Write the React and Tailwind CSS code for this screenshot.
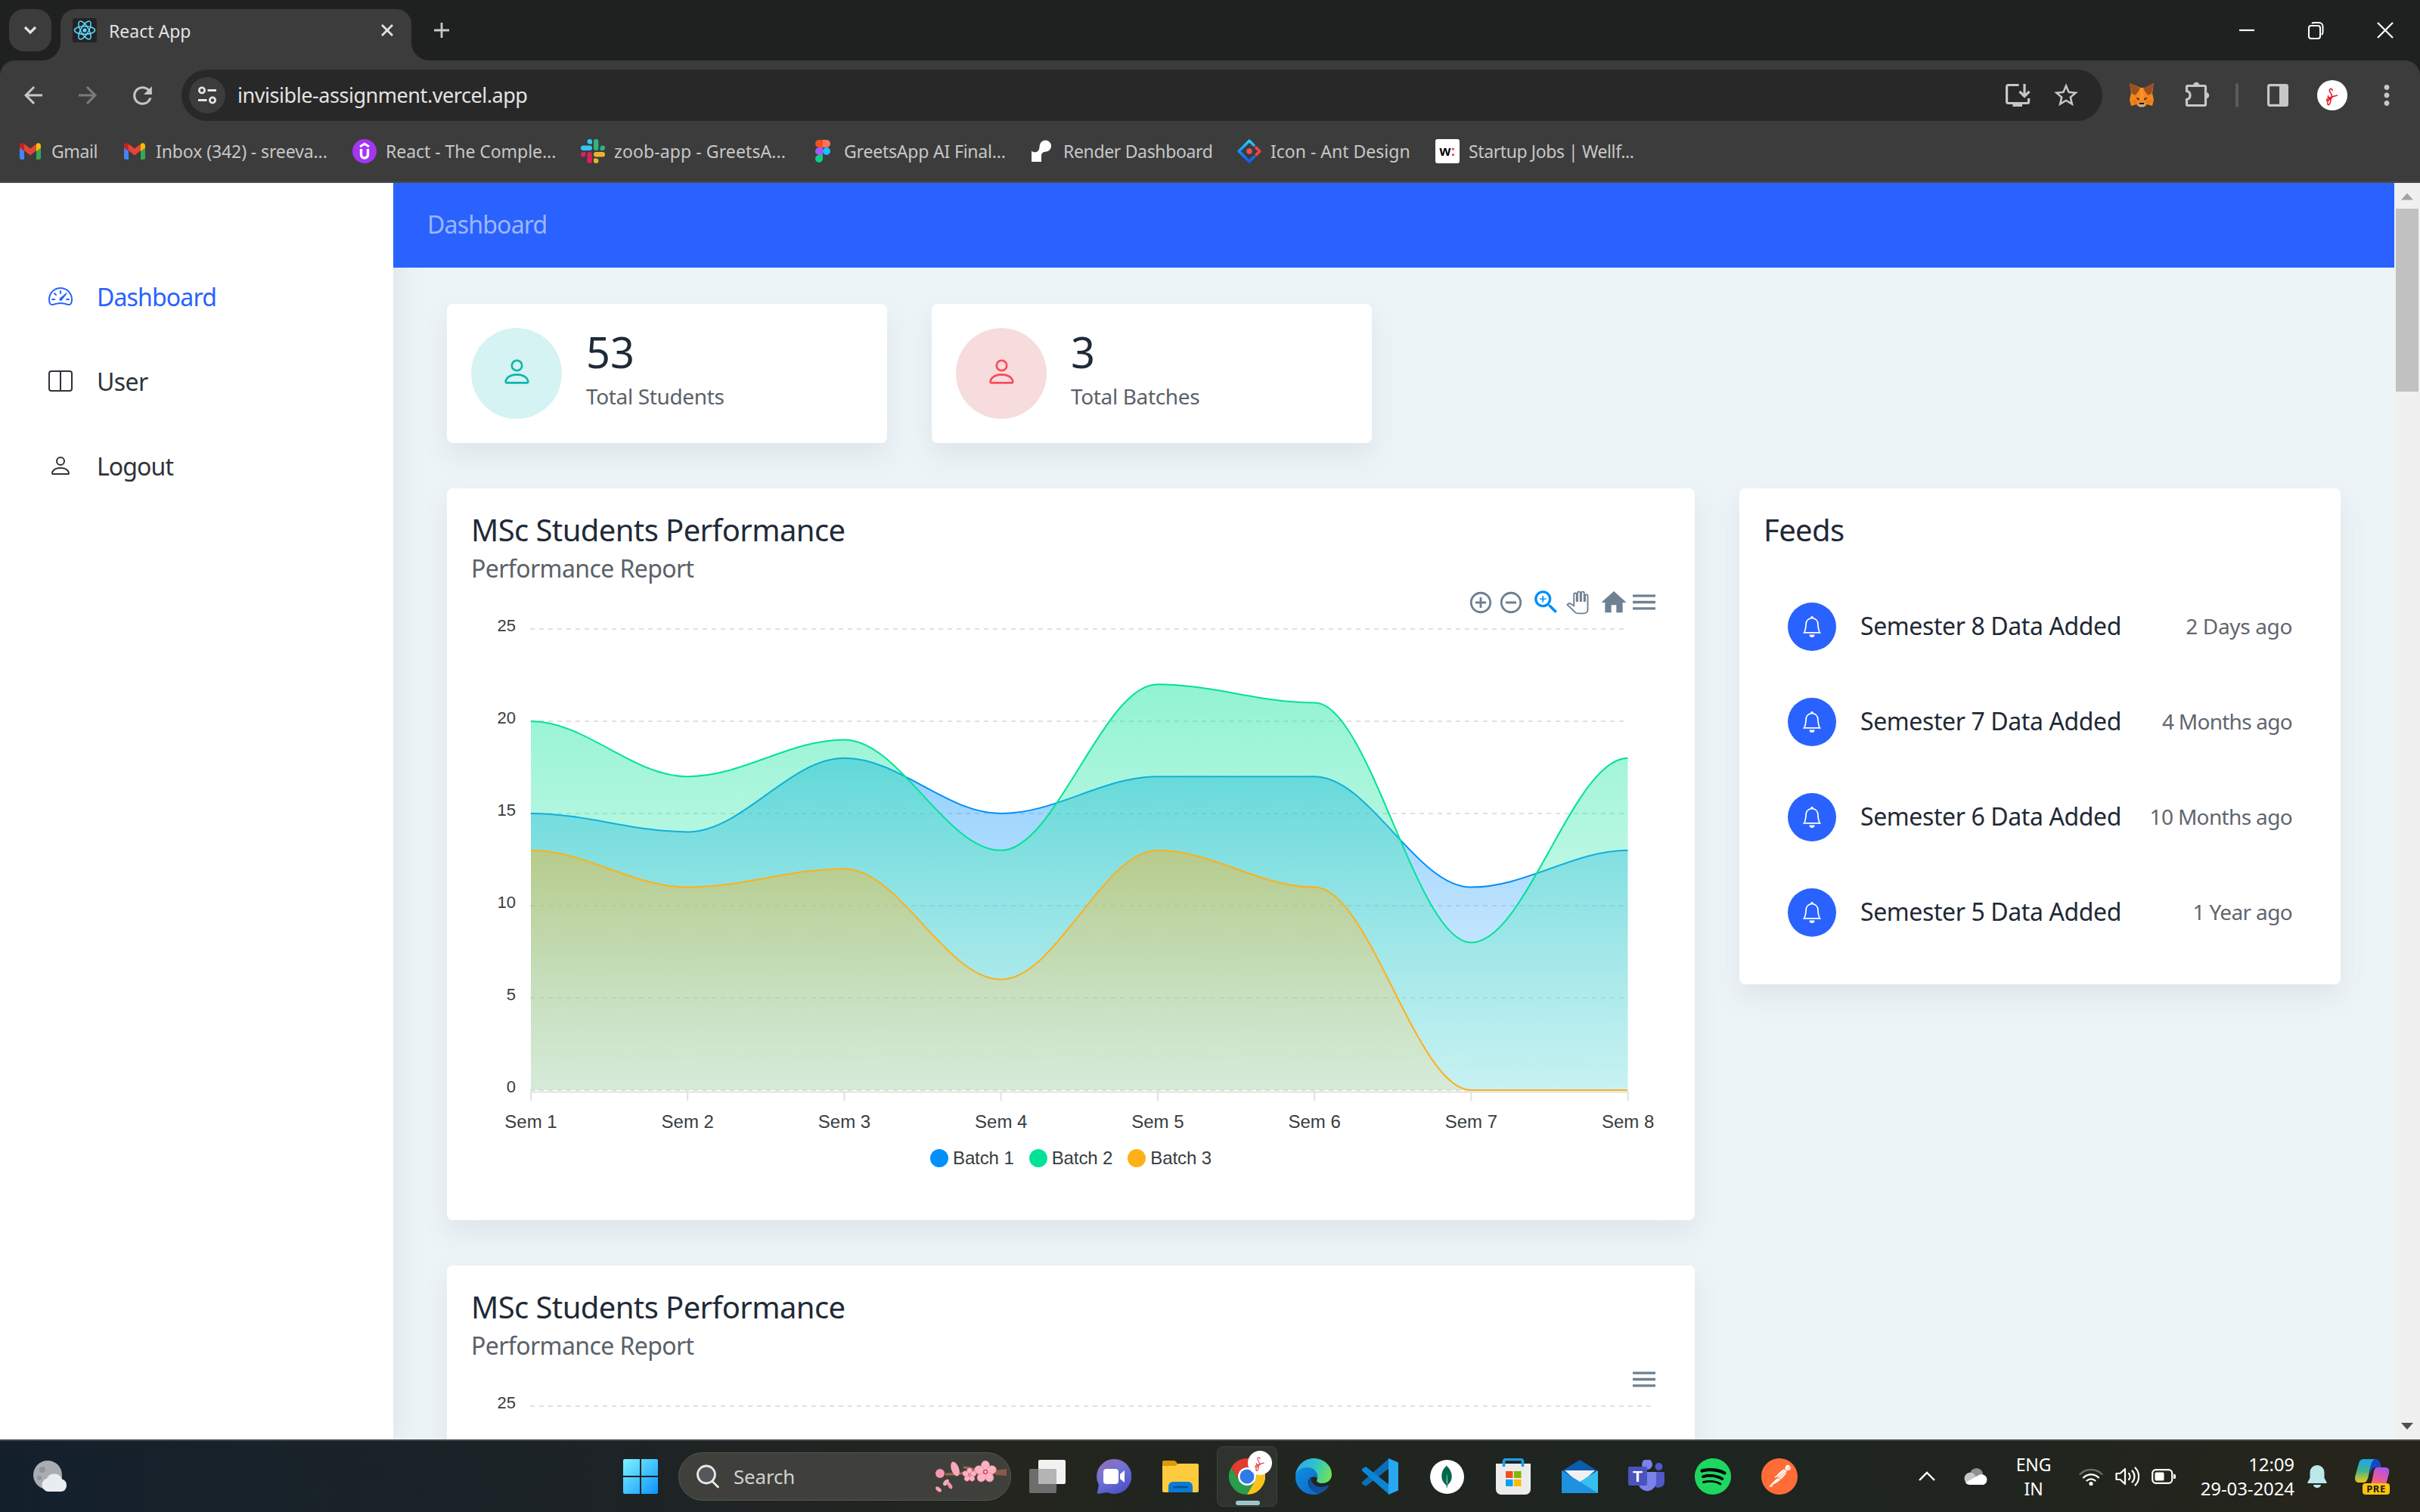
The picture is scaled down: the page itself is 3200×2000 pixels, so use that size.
import React from "react";
import { BsPerson, BsSpeedometer2, BsLayoutSplit, BsBell } from "react-icons/bs";
import {
  MdArrowBack, MdArrowForward, MdRefresh, MdStarBorder, MdMoreVert, MdZoomIn,
  MdHome, MdMenu, MdAddCircleOutline, MdRemoveCircleOutline,
} from "react-icons/md";
import { SiMongodb, SiPostman, SiSpotify } from "react-icons/si";

/* ---------- brand icons ---------- */

const ReactLogo = () => (
  <svg width="32" height="32" viewBox="0 0 32 32">
    <rect width="32" height="32" rx="3" fill="#222326" />
    <g fill="none" stroke="#61dafb" strokeWidth="1.5">
      <ellipse cx="16" cy="16" rx="13.5" ry="5.2" />
      <ellipse cx="16" cy="16" rx="13.5" ry="5.2" transform="rotate(60 16 16)" />
      <ellipse cx="16" cy="16" rx="13.5" ry="5.2" transform="rotate(120 16 16)" />
    </g>
    <circle cx="16" cy="16" r="2.6" fill="#61dafb" />
  </svg>
);

const GmailIcon = () => (
  <svg width="32" height="32" viewBox="0 0 32 32">
    <path d="M2 9v16a2 2 0 0 0 2 2h4V13z" fill="#4285f4" />
    <path d="M30 9v16a2 2 0 0 1-2 2h-4V13z" fill="#34a853" />
    <path d="M8 6.5l8 6 8-6V15l-8 6.5L8 15z" fill="#ea4335" />
    <path d="M24 6.5C27 4 30 6 30 9v2.5L24 16z" fill="#fbbc04" />
    <path d="M8 6.5C5 4 2 6 2 9v2.5L8 16z" fill="#c5221f" />
  </svg>
);

const UdemyIcon = () => (
  <svg width="32" height="32" viewBox="0 0 32 32">
    <circle cx="16" cy="16" r="16" fill="#a435f0" />
    <path d="M10 10l6-3.8 6 3.8" fill="none" stroke="#fff" strokeWidth="3" />
    <path d="M11.5 13v7.5a4.5 4.5 0 0 0 9 0V13" fill="none" stroke="#fff" strokeWidth="3.4" />
  </svg>
);

const SlackIcon = () => (
  <svg width="32" height="32" viewBox="0 0 32 32">
    <rect x="0" y="8.5" width="15" height="6.4" rx="3.2" fill="#36c5f0" />
    <path d="M15 6.4h-3.2A3.2 3.2 0 1 1 15 3.2z" fill="#36c5f0" />
    <rect x="17" y="0" width="6.4" height="15" rx="3.2" fill="#2eb67d" />
    <path d="M25.6 14.9v-3.2a3.2 3.2 0 1 1 3.2 3.2z" fill="#2eb67d" />
    <rect x="17" y="17" width="15" height="6.4" rx="3.2" fill="#ecb22e" />
    <path d="M17 25.6h3.2a3.2 3.2 0 1 1-3.2 3.2z" fill="#ecb22e" />
    <rect x="8.5" y="17" width="6.4" height="15" rx="3.2" fill="#e01e5a" />
    <path d="M6.4 17v3.2A3.2 3.2 0 1 1 3.2 17z" fill="#e01e5a" />
  </svg>
);

const FigmaIcon = () => (
  <svg width="32" height="32" viewBox="0 0 32 32">
    <path d="M16 1h-5a5 5 0 0 0 0 10h5z" fill="#f24e1e" />
    <path d="M16 1h5a5 5 0 0 1 0 10h-5z" fill="#ff7262" />
    <path d="M16 11h-5a5 5 0 0 0 0 10h5z" fill="#a259ff" />
    <circle cx="21" cy="16" r="5" fill="#1abcfe" />
    <path d="M16 21h-5a5 5 0 1 0 5 5z" fill="#0acf83" />
  </svg>
);

const RenderIcon = () => (
  <svg width="32" height="32" viewBox="0 0 32 32">
    <path d="M2 30V15.500c2 2.500 8 3 10-2 .5-2.500.5-4 1-6A7.600 7.600 0 1 1 22 16.500c-5 .5-7 2-7 6V30z" fill="#fff" />
  </svg>
);

const AntIcon = () => (
  <svg width="32" height="32" viewBox="0 0 32 32">
    <defs>
      <linearGradient id="antBlue" x1="0" y1="0" x2="0" y2="1">
        <stop offset="0" stopColor="#29cdff" />
        <stop offset="0.5" stopColor="#148eff" />
        <stop offset="1" stopColor="#0a60ff" />
      </linearGradient>
    </defs>
    <path d="M22 8.200L16 2.200 2.200 16 16 29.800l6-6" fill="none" stroke="url(#antBlue)" strokeWidth="3.600" strokeLinecap="round" strokeLinejoin="round" />
    <path d="M25 11.400L29.700 16 25 20.700" fill="none" stroke="#f5404b" strokeWidth="3.600" strokeLinecap="round" strokeLinejoin="round" />
    <circle cx="16" cy="16" r="3.700" fill="#f74a55" />
  </svg>
);

const WellfoundIcon = () => (
  <span className="flex h-8 w-8 items-center justify-center rounded-[3px] bg-white pb-[2px] font-['Liberation_Sans'] text-[19px] font-bold leading-none tracking-normal text-black">
    w<span className="text-[#ec2e3a]">:</span>
  </span>
);

const MetaMaskIcon = () => (
  <svg width="34" height="34" viewBox="0 0 34 34">
    <path d="M1 1l2 13-2 9 2 8 7-2 3 3h8l3-3 7 2 2-8-2-9 2-13-12 6h-6z" fill="#f6851b" />
    <path d="M1 1l3 14 5 2 6-9z M33 1l-3 14-5 2-6-9z" fill="#9c4f1f" />
    <path d="M15 8h4l1 15h-6z" fill="#f89c35" opacity=".6" />
    <path d="M3 24l8-1-2 6zM31 24l-8-1 2 6z" fill="#e4761b" />
    <path d="M9 20l5 1-1 3zM25 20l-5 1 1 3z" fill="#233447" />
    <path d="M14 27h6v2h-6z" fill="#161616" />
    <path d="M12 29h10l-2 3.500h-6z" fill="#c0ad9e" />
  </svg>
);

const Squiggle = ({ size, stroke = "#e8111c" }) => (
  <svg width={size} height={size} viewBox="0 0 40 40">
    <path
      d="M20 13c0-4-5-3-4 1 1 3 5 5 3 9-2 3-6 1-5-2M18 23c-4 0-7 3-6 5 2 1 6-3 9-6 2-2 4 0 6-2M15 26c-3 5-2 9 0 8 2-2 3-8 3-11"
      fill="none" stroke={stroke} strokeWidth="1.700" strokeLinecap="round"
    />
  </svg>
);

const InstallIcon = () => (
  <svg width="34" height="34" viewBox="0 0 34 34" fill="none" stroke="#c7c7c7" strokeWidth="3.200">
    <path d="M18.500 3.500H4.600a2 2 0 0 0-2 2v20a2 2 0 0 0 2 2h25a2 2 0 0 0 2-2V21" />
    <path d="M26 2v15M19.500 12l6.500 6.500 6.500-6.500" />
    <path d="M10.500 30h12.500" strokeWidth="4" />
  </svg>
);

const PuzzleIcon = () => (
  <svg width="36" height="36" viewBox="0 0 36 36">
    <path
      d="M5 7.500h22a1.500 1.500 0 0 1 1.500 1.500v23a1.500 1.500 0 0 1-1.500 1.500H5A1.500 1.500 0 0 1 3.500 32v-6.500c6-1 6-10 0-11V9A1.500 1.500 0 0 1 5 7.500z"
      fill="none" stroke="#c7c7c7" strokeWidth="3.200"
    />
    <path d="M12 7a4.200 4.200 0 0 1 8.400 0zM29 16a4.200 4.200 0 0 1 0 8.400z" fill="#c7c7c7" />
  </svg>
);

/* ---------- browser chrome ---------- */

const Flare = ({ flip }) => (
  <svg width="24" height="24" viewBox="0 0 24 24" className={flip ? "-scale-x-100 shrink-0" : "shrink-0"}>
    <path d="M24 0v24H0C13 24 24 13 24 0z" fill="#3c3c3c" />
  </svg>
);

const TabStrip = () => (
  <div className="flex h-20 items-end bg-[#1f2120] pl-3">
    <button className="z-10 mb-3 flex h-14 w-14 items-center justify-center rounded-[20px] bg-[#3c3c3c]">
      <svg width="18" height="12" viewBox="0 0 18 12">
        <path d="M2 2l7 7 7-7" fill="none" stroke="#e3e3e3" strokeWidth="3.200" />
      </svg>
    </button>
    <div className="-ml-3 flex items-end">
      <Flare />
      <div className="flex h-[68px] w-[464px] items-center rounded-t-[20px] bg-[#3c3c3c] pb-3 pl-4 pr-[22px]">
        <ReactLogo />
        <span className="ml-4 flex-1 pt-px text-[23px] leading-8 text-[#e3e3e3]">React App</span>
        <svg width="20" height="20" viewBox="0 0 20 20">
          <path d="M3 3l14 14M17 3L3 17" stroke="#e3e3e3" strokeWidth="2.800" />
        </svg>
      </div>
      <Flare flip />
    </div>
    <svg width="22" height="22" viewBox="0 0 22 22" className="mb-[29px] ml-[5px]">
      <path d="M11 1v20M1 11h20" stroke="#c7c7c7" strokeWidth="2.800" />
    </svg>
    <div className="mb-[26px] ml-auto flex items-center pr-[35px]">
      <svg width="20" height="28" viewBox="0 0 20 28"><path d="M0 14h20" stroke="#fff" strokeWidth="2.200" /></svg>
      <svg width="22" height="28" viewBox="0 0 22 28" className="ml-[70px]" fill="none" stroke="#fff" strokeWidth="2">
        <rect x="2" y="8" width="15" height="17" rx="3" />
        <path d="M6 5c1-1 2-1 3-1h6.500a5 5 0 0 1 5 5v7c0 2-.5 3-1.500 4" />
      </svg>
      <svg width="22" height="28" viewBox="0 0 22 28" className="ml-[70px]">
        <path d="M1 4l20 20M21 4L1 24" stroke="#fff" strokeWidth="2.200" />
      </svg>
    </div>
  </div>
);

const Toolbar = () => (
  <div className="flex h-[92px] items-center pl-2 pr-3">
    <span className="flex w-[72px] justify-center"><MdArrowBack size={36} color="#c7c7c7" /></span>
    <span className="flex w-[72px] justify-center"><MdArrowForward size={36} color="#7c7c7c" /></span>
    <span className="flex w-[72px] justify-center"><MdRefresh size={37} color="#c7c7c7" /></span>
    <div className="ml-4 flex h-[68px] w-[2540px] items-center rounded-full bg-[#282828] pl-[10px] pr-[29px]">
      <span className="flex h-12 w-12 items-center justify-center rounded-full bg-[#3c3c3c]">
        <svg width="26" height="24" viewBox="0 0 26 24" fill="none" stroke="#e3e3e3" strokeWidth="2.800">
          <circle cx="6" cy="5.500" r="3.600" />
          <path d="M13.500 5.500H25M1 18.500h11.500" />
          <circle cx="20" cy="18.500" r="3.600" />
        </svg>
      </span>
      <span className="ml-4 flex-1 text-[27px] leading-9 tracking-[-0.45px] text-[#e3e3e3]">invisible-assignment.vercel.app</span>
      <InstallIcon />
      <span className="ml-[28px]"><MdStarBorder size={38} color="#c7c7c7" /></span>
    </div>
    <span className="ml-5 flex w-16 justify-center"><MetaMaskIcon /></span>
    <span className="ml-[10px] flex w-16 justify-center pb-[4px]"><PuzzleIcon /></span>
    <span className="ml-[18px] h-8 w-1 rounded-full bg-[#5c5c5c]" />
    <span className="ml-5 flex w-16 justify-center">
      <svg width="30" height="32" viewBox="0 0 30 32">
        <rect x="2.600" y="2.600" width="24.800" height="26.800" rx="1.500" fill="none" stroke="#c7c7c7" strokeWidth="3.200" />
        <path d="M17 2h11v28H17z" fill="#c7c7c7" />
      </svg>
    </span>
    <span className="ml-2 flex w-16 justify-center">
      <span className="flex h-10 w-10 items-center justify-center rounded-full bg-white"><Squiggle size={36} /></span>
    </span>
    <span className="ml-2 flex w-16 justify-center"><MdMoreVert size={42} color="#c7c7c7" /></span>
  </div>
);

const BOOKMARKS = [
  { icon: <GmailIcon />, label: "Gmail", cls: "w-[138px] tracking-[-0.4px]" },
  { icon: <GmailIcon />, label: "Inbox (342) - sreeva...", cls: "w-[304px] tracking-[-0.1px]" },
  { icon: <UdemyIcon />, label: "React - The Comple...", cls: "w-[302px] tracking-[-0.05px]" },
  { icon: <SlackIcon />, label: "zoob-app - GreetsA...", cls: "w-[304px] tracking-[0.1px]" },
  { icon: <FigmaIcon />, label: "GreetsApp AI Final...", cls: "w-[290px] tracking-[-0.2px]" },
  { icon: <RenderIcon />, label: "Render Dashboard", cls: "w-[274px] tracking-[-0.35px]" },
  { icon: <AntIcon />, label: "Icon - Ant Design", cls: "w-[262px] tracking-[0px]" },
  { icon: <WellfoundIcon />, label: "Startup Jobs | Wellf...", cls: "w-[300px] tracking-[-0.4px]" },
];

const Bookmarks = () => (
  <div className="flex h-14 items-center pl-6">
    {BOOKMARKS.map((b) => (
      <div key={b.label} className={`flex shrink-0 items-center gap-3 whitespace-nowrap text-[23px] leading-8 text-[#c7c7c7] ${b.cls}`}>
        {b.icon}
        <span>{b.label}</span>
      </div>
    ))}
  </div>
);

/* ---------- dashboard ---------- */

const NavItem = ({ icon, label, cls }) => (
  <div className={`flex h-28 items-center pl-16 text-[32px] ${cls}`}>
    {icon}
    <span className="ml-8 pt-[2px]">{label}</span>
  </div>
);

const Sidebar = () => (
  <aside className="z-10 w-[520px] shrink-0 bg-white pt-[94px] shadow-[2px_0_40px_rgba(90,97,105,0.13)]">
    <NavItem icon={<BsSpeedometer2 size={32} />} label="Dashboard" cls="text-[#2962ff] tracking-[-0.85px]" />
    <NavItem icon={<BsLayoutSplit size={32} />} label="User" cls="text-[#2f3339] tracking-[-0.6px]" />
    <NavItem icon={<BsPerson size={32} />} label="Logout" cls="text-[#2f3339] tracking-[-0.9px]" />
  </aside>
);

const Card = ({ className, children }) => (
  <section className={`rounded-[8px] bg-white shadow-[0_16px_36px_rgba(90,97,105,0.1)] ${className}`}>{children}</section>
);

const StatCard = ({ value, label, circle }) => (
  <Card className="flex h-[184px] w-[582px] items-start pl-8 pt-8">
    <span className={`flex h-[120px] w-[120px] items-center justify-center rounded-full pb-[6px] ${circle}`}>
      <BsPerson size={43} />
    </span>
    <div className="ml-8">
      <div className="h-[61px] text-[56px] leading-[62px] text-[#1f2a37] [font-weight:450]">{value}</div>
      <div className="text-[28px] leading-[58px] tracking-[-0.35px] text-[#5a6169]">{label}</div>
    </div>
  </Card>
);

const SERIES = [
  { name: "Batch 1", color: "#008ffb", light: "#80c7fd", data: [15, 14, 18, 15, 17, 17, 11, 13], dot: "bg-[#008ffb]" },
  { name: "Batch 2", color: "#00e396", light: "#80f1cb", data: [20, 17, 19, 13, 22, 21, 8, 18], dot: "bg-[#00e396]" },
  { name: "Batch 3", color: "#feb019", light: "#ffd88c", data: [13, 11, 12, 6, 13, 11, 0, 0], dot: "bg-[#feb019]" },
];

const X0 = 111;
const STEP = 207.24;
const TOP = 11;
const UNIT = 24.4;
const px = (i) => X0 + i * STEP;
const py = (v) => TOP + (25 - v) * UNIT;

/* Cubic curve with horizontal tangents at every point. */
const curve = (data) =>
  data.reduce((d, v, i) => {
    if (i === 0) return `M${px(0)} ${py(v)}`;
    const h = STEP * 0.35;
    return `${d} C${px(i - 1) + h} ${py(data[i - 1])} ${px(i) - h} ${py(v)} ${px(i)} ${py(v)}`;
  }, "");

const AreaChart = ({ id, plain }) => (
  <svg width="1650" height="690" viewBox="0 0 1650 690" className="block overflow-visible">
    <defs>
      {SERIES.map((s, i) => (
        <linearGradient key={s.name} id={`${id}-${i}`} x1="0" y1="0" x2="0" y2="1">
          <stop offset="0" stopColor={s.color} stopOpacity="0.43" />
          <stop offset="1" stopColor={s.light} stopOpacity="0.25" />
        </linearGradient>
      ))}
      <clipPath id={`${id}-clip`}><rect x={X0} y="0" width={STEP * 7} height="640" /></clipPath>
    </defs>
    {(plain ? [25] : [25, 20, 15, 10, 5, 0]).map((v) => (
      <g key={v}>
        <line x1={X0 - 1} x2={plain ? 1593 : 1557} y1={py(v)} y2={py(v)} stroke="#e0e0e0" strokeWidth="2" strokeDasharray="6 6" />
        <text x="91" y={py(v) + 2.500} textAnchor="end" fill="#373d3f" className="font-['Liberation_Sans'] text-[22px]">{v}</text>
      </g>
    ))}
    {!plain && (
      <>
        <line x1={X0} x2={px(7)} y1={py(0) + 2.500} y2={py(0) + 2.500} stroke="#e0e0e0" strokeWidth="2" />
        <g clipPath={`url(#${id}-clip)`}>
          {SERIES.map((s, i) => (
            <g key={s.name}>
              <path d={`${curve(s.data)} V${py(0)} H${X0} Z`} fill={`url(#${id}-${i})`} />
              <path d={curve(s.data)} fill="none" stroke={s.color} strokeWidth="2" />
            </g>
          ))}
        </g>
        {SERIES[0].data.map((_, i) => (
          <g key={i}>
            <line x1={px(i)} x2={px(i)} y1={py(0) + 2} y2={py(0) + 14} stroke="#e0e0e0" strokeWidth="2" />
            <text x={px(i)} y="671" textAnchor="middle" fill="#373d3f" className="font-['Liberation_Sans'] text-[24px]">{`Sem ${i + 1}`}</text>
          </g>
        ))}
      </>
    )}
  </svg>
);

const PanIcon = () => (
  <svg width="30" height="32" viewBox="0 0 24 25" fill="#fff" stroke="#6e8192" strokeWidth="1.500">
    <path d="M22.800 5.500V20c0 2.200-1.800 4-4 4h-6.500c-1.080 0-2.100-.43-2.850-1.190L1.200 14.830s1.260-1.230 1.300-1.250c.22-.19.49-.29.79-.29.22 0 .42.060.6.160.040.010 4.310 2.460 4.310 2.460V4c0-.83.67-1.500 1.500-1.500S11 3.170 11 4v7h1V2.500c0-.83.67-1.500 1.500-1.500S15 1.670 15 2.500V11h1V2.500c0-.83.67-1.500 1.500-1.500s1.500.67 1.500 1.500V11h1V5.500c0-.83.67-1.500 1.500-1.500s1.300.67 1.300 1.500z" />
  </svg>
);

const ChartCard = ({ id, plain }) => (
  <Card className="h-[968px] w-[1650px] shrink-0 overflow-hidden pt-[25px]">
    <h5 className="h-[60px] pl-8 text-[40px] leading-[60px] tracking-[-0.6px] text-[#1f2a37] [font-weight:450]">MSc Students Performance</h5>
    <h6 className="h-[41px] pl-8 text-[32px] leading-[41px] tracking-[-0.6px] text-[#5a6169]">Performance Report</h6>
    <div className="flex h-[49px] items-center justify-end pr-[47px] text-[#6e8192]">
      {!plain && (
        <>
          <span className="flex w-10 justify-center"><MdAddCircleOutline size={34} /></span>
          <span className="flex w-10 justify-center"><MdRemoveCircleOutline size={34} /></span>
          <span className="ml-1 flex w-11 justify-center text-[#008ffb]"><MdZoomIn size={41} /></span>
          <span className="flex w-10 justify-center"><PanIcon /></span>
          <span className="ml-2 flex w-10 justify-center"><MdHome size={40} /></span>
        </>
      )}
      <span className="flex w-10 justify-center"><MdMenu size={41} /></span>
    </div>
    <AreaChart id={id} plain={plain} />
    {!plain && (
      <div className="flex h-[42px] items-center justify-center gap-[20px] font-['Liberation_Sans'] text-[24px] leading-6 text-[#373d3f]">
        {SERIES.map((s) => (
          <span key={s.name} className="flex items-center gap-[6px] tracking-[-0.1px]">
            <span className={`h-6 w-6 rounded-full ${s.dot}`} />
            {s.name}
          </span>
        ))}
      </div>
    )}
  </Card>
);

const FEEDS = [
  ["Semester 8 Data Added", "2 Days ago", "tracking-[-0.35px]"],
  ["Semester 7 Data Added", "4 Months ago", "tracking-[-0.75px]"],
  ["Semester 6 Data Added", "10 Months ago", "tracking-[-0.65px]"],
  ["Semester 5 Data Added", "1 Year ago", "tracking-[-0.65px]"],
];

const Feeds = () => (
  <Card className="ml-[59px] h-[656px] w-[795px] shrink-0 pt-[25px]">
    <h5 className="h-[60px] pl-8 text-[40px] leading-[60px] tracking-[-0.6px] text-[#1f2a37] [font-weight:450]">Feeds</h5>
    <div className="mt-[35px]">
      {FEEDS.map(([title, when, cls]) => (
        <div key={title} className="flex h-[126px] items-center pl-16 pr-16">
          <span className="flex h-16 w-16 items-center justify-center rounded-full bg-[#2962ff] text-white"><BsBell size={28} /></span>
          <span className="ml-8 pb-[3px] text-[32px] leading-10 tracking-[-0.4px] text-[#212934]">{title}</span>
          <span className={`ml-auto pb-[3px] text-[28px] leading-9 text-[#5f666e] ${cls}`}>{when}</span>
        </div>
      ))}
    </div>
  </Card>
);

const Scrollbar = () => (
  <div className="flex w-[34px] shrink-0 flex-col items-center bg-[#f0f0f0]">
    <svg width="16" height="34" viewBox="0 0 16 34"><path d="M8 13.500L16 22.500H0z" fill="#a3a3a3" /></svg>
    <span className="h-[242px] w-[30px] bg-[#c1c1c1]" />
    <svg width="16" height="34" viewBox="0 0 16 34" className="mt-auto"><path d="M0 12h16L8 21z" fill="#505050" /></svg>
  </div>
);

/* ---------- taskbar ---------- */

const Cloud = ({ w }) => (
  <svg width={w} height={w * 0.68} viewBox="0 0 34 23">
    <circle cx="17" cy="9" r="9" fill="#8f9191" />
    <path d="M9 6a8 8 0 0 0-1 16h14L14 8C12.500 6.500 11 6 9 6z" fill="#c5c6c6" />
    <path d="M7 22.500a6 6 0 0 1-5-3L21 9a7 7 0 0 1 6 13.500z" fill="#fff" />
  </svg>
);

const Weather = () => (
  <svg width="48" height="44" viewBox="0 0 48 44">
    <circle cx="22" cy="20" r="19" fill="#a9adb3" />
    <circle cx="15" cy="13" r="4" fill="#8f949b" />
    <circle cx="11" cy="24" r="3" fill="#8f949b" />
    <path d="M22 42a9 9 0 0 1-1-17.500 11 11 0 0 1 20 1A8.500 8.500 0 0 1 40 42z" fill="#e9edf2" />
  </svg>
);

const StartIcon = () => (
  <svg width="46" height="46" viewBox="0 0 46 46">
    <defs>
      <linearGradient id="win" x1="0" y1="0" x2="1" y2="1">
        <stop offset="0" stopColor="#7ff4ff" />
        <stop offset="1" stopColor="#0a93ff" />
      </linearGradient>
    </defs>
    <path d="M2 0h20v22H0V2a2 2 0 0 1 2-2zM24 0h20a2 2 0 0 1 2 2v20H24zM0 24h22v22H2a2 2 0 0 1-2-2zM24 24h22v20a2 2 0 0 1-2 2H24z" fill="url(#win)" />
  </svg>
);

const Flower = ({ x, y, r }) => (
  <g transform={`translate(${x} ${y})`}>
    {[0, 72, 144, 216, 288].map((a) => (
      <ellipse key={a} cx="0" cy={-r * 0.58} rx={r * 0.38} ry={r * 0.44} fill="#f9b4c3" stroke="#f08ba3" strokeWidth="0.800" transform={`rotate(${a})`} />
    ))}
    <circle r={r * 0.22} fill="#e2476e" />
    <circle r={r * 0.1} fill="#fbe0ff" />
  </g>
);

const Blossom = () => (
  <svg width="96" height="44" viewBox="0 0 96 44" className="mt-[2px]">
    <path d="M84 16c-14-1-18 3-30-3-4-2-12-4-16-4M78 16c-14 2-24-3-40 0-8 3-16 2-24 2" fill="none" stroke="#a0674a" strokeWidth="3" />
    <path d="M80 13l15-2v9l-15-1z" fill="#8c5a44" />
    <circle cx="7" cy="17" r="6" fill="#f39ab0" />
    <ellipse cx="27" cy="11" rx="5" ry="10" fill="#f6a9ba" transform="rotate(-20 27 11)" />
    <Flower x={46} y={19} r={9} />
    <Flower x={67} y={15} r={14.5} />
    <ellipse cx="15" cy="29" rx="5" ry="3" fill="#f6a9ba" transform="rotate(-50 15 29)" />
    <ellipse cx="20" cy="33" rx="5" ry="2.500" fill="#f28fa8" transform="rotate(60 20 33)" />
    <ellipse cx="5" cy="38" rx="4.500" ry="2.500" fill="#f6a0b4" transform="rotate(40 5 38)" />
  </svg>
);

const TaskViewIcon = () => (
  <svg width="48" height="44" viewBox="0 0 48 44">
    <rect x="12" y="0" width="36" height="32" rx="2" fill="#f2f2f2" />
    <rect x="0" y="12" width="36" height="32" rx="2" fill="#6d6d6d" />
    <path d="M12 12h24v20H12z" fill="#b4b4b4" />
  </svg>
);

const ChatIcon = () => (
  <svg width="46" height="46" viewBox="0 0 46 46">
    <defs>
      <linearGradient id="chat" x1="0" y1="0" x2="0.600" y2="1">
        <stop offset="0" stopColor="#a06ab4" />
        <stop offset="0.500" stopColor="#6f73d8" />
        <stop offset="1" stopColor="#4f52c8" />
      </linearGradient>
    </defs>
    <path d="M23 0a23 23 0 1 1-9 44L2 46c-1 0-1.500-1-1-2l2-10A23 23 0 0 1 23 0z" fill="url(#chat)" />
    <rect x="9" y="13" width="20" height="20" rx="4" fill="#fff" />
    <path d="M31 20l6-5v16l-6-5z" fill="#fff" />
  </svg>
);

const FolderIcon = () => (
  <svg width="48" height="42" viewBox="0 0 48 42">
    <path d="M0 2a2 2 0 0 1 2-2h13c2 0 3 1 5 4v6H0z" fill="#dc9a08" />
    <path d="M0 7h17l4-3h25a2 2 0 0 1 2 2v34a2 2 0 0 1-2 2H2a2 2 0 0 1-2-2z" fill="#fecb3e" />
    <path d="M8 42V34a6 6 0 0 1 6-6h20a6 6 0 0 1 6 6v8z" fill="#0b7bd0" />
    <path d="M14 35h20" stroke="#06519c" strokeWidth="2.500" />
  </svg>
);

const ChromeIcon = () => (
  <svg width="48" height="48" viewBox="0 0 48 48">
    <path d="M24 12H44.800A24 24 0 0 0 3.200 12L13.600 30A12 12 0 0 1 24 12Z" fill="#e33b2e" />
    <path d="M3.200 12A24 24 0 0 0 24 48L34.400 30A12 12 0 0 1 13.600 30Z" fill="#2a9d4a" />
    <path d="M24 48A24 24 0 0 0 44.800 12H24A12 12 0 0 1 34.400 30Z" fill="#fcc419" />
    <circle cx="24" cy="24" r="12" fill="#fff" />
    <circle cx="24" cy="24" r="9.500" fill="#2f7bea" />
  </svg>
);

const EdgeIcon = () => (
  <svg width="48" height="48" viewBox="0 0 48 48">
    <defs>
      <linearGradient id="edgeTop" x1="0" y1="0.300" x2="1" y2="0.600">
        <stop offset="0" stopColor="#2fa8ec" />
        <stop offset="0.500" stopColor="#2fc3c9" />
        <stop offset="1" stopColor="#70e353" />
      </linearGradient>
      <linearGradient id="edgeLow" x1="0" y1="0" x2="1" y2="1">
        <stop offset="0" stopColor="#118fe0" />
        <stop offset="1" stopColor="#0a66c2" />
      </linearGradient>
    </defs>
    <path d="M0 22C2 9 12 0 24 0C38 0 48 10 48 21C48 29 42 33 35 33C31 33 27 31 28.500 28C31 24 28 14 15 14C8 14 3 17 0 22Z" fill="url(#edgeTop)" />
    <path d="M0 25C0 16 8 12 16 12C25 12 30 19 29 26C23 22 17 26 17 32C17 40 25 46 33 46C30 47.500 27 48 24 48C11 48 0 38 0 25Z" fill="url(#edgeLow)" />
    <path d="M20 25C14 33 20 46 33 46C38 44 42 41 44 36.500C44 35.500 43 35.500 42 36C30 41 20 34 20 25Z" fill="#124f9c" />
  </svg>
);

const VsCodeIcon = () => (
  <svg width="48" height="48" viewBox="0 0 48 48">
    <path d="M36 0V13L5 37L0 34V31.500Z" fill="#0a6fb8" />
    <path d="M36 48V35L5 11L0 14V16.500Z" fill="#0a86d6" />
    <path d="M35 0L48 5.500V42.500L35 48Z" fill="#29a7f0" />
  </svg>
);

const StoreIcon = () => (
  <svg width="46" height="48" viewBox="0 0 46 48">
    <path d="M0 7h46v34a7 7 0 0 1-7 7H7a7 7 0 0 1-7-7z" fill="#ececec" />
    <path d="M10.500 11V4a2.500 2.500 0 0 1 2.500-2.500h20A2.500 2.500 0 0 1 35.500 4v7" fill="none" stroke="#1c9fe6" strokeWidth="3.600" />
    <path d="M13 17h9.500v9H13z" fill="#f25022" />
    <path d="M24 17h9.500v9H24z" fill="#7fba00" />
    <path d="M13 28h9.500v9H13z" fill="#00a4ef" />
    <path d="M24 28h9.500v9H24z" fill="#ffb900" />
  </svg>
);

const MailIcon = () => (
  <svg width="48" height="44" viewBox="0 0 48 44">
    <path d="M0 15L24 0l24 15v10H0z" fill="#0b5cad" />
    <path d="M4 14h40L24 32z" fill="#f1f1f4" />
    <path d="M48 14v30H0z" fill="#37bff0" />
    <path d="M0 14l48 30H0z" fill="#1e92e0" />
  </svg>
);

const TeamsIcon = () => (
  <div className="relative flex h-[44px] w-[48px] items-center">
    <svg width="48" height="44" viewBox="0 0 48 44">
      <circle cx="25" cy="6" r="7" fill="#7b83eb" />
      <circle cx="40.500" cy="9" r="5" fill="#5059c9" />
      <path d="M33 16h13a2 2 0 0 1 2 2v11a8 8 0 0 1-13 6z" fill="#5059c9" />
      <path d="M13 16h24v14a12 12 0 0 1-23 4z" fill="#7b83eb" />
      <rect x="0" y="9" width="25" height="25" rx="2" fill="#4b53bc" />
    </svg>
    <span className="absolute left-[6px] top-[10px] font-['Liberation_Sans'] text-[21px] font-bold leading-6 text-white">T</span>
  </div>
);

const Disc = ({ size, cls, children }) => (
  <span className={`flex items-center justify-center rounded-full ${size} ${cls}`}>{children}</span>
);

const ChromeSlot = () => (
  <div className="relative flex h-20 w-20 items-center justify-center rounded-[8px] border border-[#3d413a] bg-[#2f332d]">
    <ChromeIcon />
    <span className="absolute right-[6px] top-[5px] flex h-8 w-8 items-center justify-center rounded-full bg-white"><Squiggle size={30} stroke="#e5525c" /></span>
    <span className="absolute bottom-[1px] left-[24px] h-[6px] w-8 rounded-full bg-[#9cc6cf]" />
  </div>
);

const APPS = [
  <TaskViewIcon />, <ChatIcon />, <FolderIcon />, <ChromeSlot />, <EdgeIcon />, <VsCodeIcon />,
  <Disc size="h-[45px] w-[45px]" cls="bg-white"><SiMongodb size={30} color="#00684a" /></Disc>,
  <StoreIcon />, <MailIcon />, <TeamsIcon />,
  <Disc size="h-[46px] w-[46px]" cls="bg-black"><SiSpotify size={48} color="#1ed760" className="shrink-0" /></Disc>,
  <Disc size="h-[46px] w-[46px]" cls="bg-white"><SiPostman size={48} color="#ff6c37" className="shrink-0" /></Disc>,
];

const Copilot = () => (
  <div className="relative flex h-[46px] w-[46px] items-center justify-center">
    <svg width="46" height="46" viewBox="0 0 46 46">
      <defs>
        <linearGradient id="copA" x1="0" y1="0" x2="0" y2="1">
          <stop offset="0" stopColor="#1fa4f4" />
          <stop offset="0.500" stopColor="#3fb58c" />
          <stop offset="1" stopColor="#f5c51c" />
        </linearGradient>
        <linearGradient id="copB" x1="0.800" y1="0" x2="0.200" y2="1">
          <stop offset="0" stopColor="#a855f0" />
          <stop offset="0.600" stopColor="#ef5a90" />
          <stop offset="1" stopColor="#f98a4b" />
        </linearGradient>
      </defs>
      <path d="M20 0h8c3 0 5 3 7 11h-8c-4 0-6 4-7 9z" fill="#1546c8" />
      <path d="M29 11h11c5 0 6 4 5 8l-5 18H14c6 0 7-3 9-10l2-11c1-3 2-5 4-5z" fill="url(#copB)" />
      <path d="M12 0h14c-4 2-5 7-7 17-2 10-3 14-8 14H5c-5 0-6-5-4-11L5 6c1-4 3-6 7-6z" fill="url(#copA)" />
    </svg>
    <span className="absolute -bottom-px right-0 flex h-[15px] w-[36px] items-center justify-center rounded-[4px] bg-[#fcc50c] text-[13px] font-bold leading-none tracking-[0.5px] text-[#1b1b1b]">PRE</span>
  </div>
);

const Tray = () => (
  <div className="ml-auto flex items-center pr-10 text-white">
    <span className="flex w-16 justify-center">
      <svg width="24" height="16" viewBox="0 0 24 16"><path d="M2 13L12 3l10 10" fill="none" stroke="#fff" strokeWidth="2.400" /></svg>
    </span>
    <span className="flex w-[66px] justify-center"><Cloud w={33} /></span>
    <span className="w-[86px] text-center text-[23px] leading-8 tracking-[-0.2px]">ENG<br />IN</span>
    <div className="ml-[17px] flex items-center gap-4">
      <svg width="32" height="26" viewBox="0 0 32 26" fill="none" strokeWidth="2.300" strokeLinecap="round">
        <path d="M1.500 10a20.500 20.500 0 0 1 29 0" stroke="#6a6c68" />
        <path d="M6 14.500a14 14 0 0 1 20 0M10.500 18.500a8 8 0 0 1 11 0" stroke="#fff" />
        <circle cx="16" cy="22.500" r="2.600" fill="#fff" />
      </svg>
      <svg width="32" height="28" viewBox="0 0 32 28" fill="none" stroke="#fff" strokeWidth="2.200" strokeLinecap="round" strokeLinejoin="round">
        <path d="M1.500 10v8h5l6.500 6V4L6.500 10z" />
        <path d="M18 10a6 6 0 0 1 0 8M22.500 6.500a11 11 0 0 1 0 15M26.500 2.500a16.500 16.500 0 0 1 0 23" />
      </svg>
      <svg width="32" height="20" viewBox="0 0 32 20">
        <rect x="1.200" y="1.200" width="26" height="17.600" rx="4.500" fill="none" stroke="#fff" strokeWidth="2.200" />
        <rect x="4.500" y="4.500" width="12" height="11" rx="1.500" fill="#fff" />
        <path d="M29 7h1.500a1.500 1.500 0 0 1 1.500 1.500v3a1.500 1.500 0 0 1-1.500 1.500H29z" fill="#fff" />
      </svg>
    </div>
    <span className="w-[157px] text-right text-[24px] leading-8 tracking-[-0.1px]">12:09<br />29-03-2024</span>
    <svg width="26" height="30" viewBox="0 0 26 30" className="ml-[17px]">
      <path d="M13 0a9.500 9.500 0 0 1 9.500 9.500V17l3 5.500c.5 1 0 1.500-1 1.500h-23c-1 0-1.500-.5-1-1.500l3-5.500V9.500A9.500 9.500 0 0 1 13 0zM8 26h10a5 4 0 0 1-10 0z" fill="#bce8ea" />
    </svg>
    <span className="ml-[37px]"><Copilot /></span>
  </div>
);

const Taskbar = () => (
  <footer className="z-20 flex h-24 shrink-0 items-center border-t-2 border-[#454745] bg-[linear-gradient(90deg,#13202c_0%,#18222a_10%,#1d2326_25%,#23251e_42%,#202520_55%,#1e2420_75%,#26251b_100%)]">
    <span className="flex w-[130px] justify-center"><Weather /></span>
    <span className="ml-[673px] flex w-[88px] justify-center"><StartIcon /></span>
    <div className="ml-[6px] flex h-16 w-[440px] items-center rounded-full border border-[#565751] bg-[#3f403b] pl-[22px] pr-1">
      <svg width="32" height="32" viewBox="0 0 32 32" fill="none" stroke="#e6eaec" strokeWidth="2.800" strokeLinecap="round">
        <circle cx="14" cy="13.500" r="11.500" fill="#56575a" />
        <path d="M22 22.500l7.500 7.500" />
      </svg>
      <span className="ml-[18px] flex-1 text-[26px] leading-8 tracking-[-0.2px] text-[#d0d1cf]">Search</span>
      <Blossom />
    </div>
    <div className="ml-1 flex">
      {APPS.map((app, i) => (
        <span key={i} className="flex h-20 w-[88px] items-center justify-center">{app}</span>
      ))}
    </div>
    <Tray />
  </footer>
);

export default function App() {
  return (
    <div className="flex h-[2000px] w-[3200px] flex-col overflow-hidden bg-[#1f2120] font-['Noto_Sans',sans-serif]">
      <TabStrip />
      <div className="h-[162px] shrink-0 rounded-t-[20px] border-b-2 border-[#4a4a4a] bg-[#3c3c3c]">
        <Toolbar />
        <Bookmarks />
      </div>
      <div className="flex h-[1662px] shrink-0 overflow-hidden">
        <Sidebar />
        <main className="flex flex-1 flex-col bg-[#edf4f8]">
          <header className="z-20 flex h-28 shrink-0 items-center bg-[#2962ff] pb-[2px] pl-[45px] text-[32px] tracking-[-0.8px] text-[#9db6ff]">Dashboard</header>
          <div className="pl-[71px] pt-12">
            <div className="flex gap-[59px]">
              <StatCard value="53" label="Total Students" circle="bg-[#d4f3f2] text-[#12b5ad]" />
              <StatCard value="3" label="Total Batches" circle="bg-[#f7dcdd] text-[#fb4a5c]" />
            </div>
            <div className="mt-[60px] flex items-start">
              <div className="flex flex-col gap-[60px]">
                <ChartCard id="performance" />
                <ChartCard id="performance-next" plain />
              </div>
              <Feeds />
            </div>
          </div>
        </main>
        <Scrollbar />
      </div>
      <Taskbar />
    </div>
  );
}
